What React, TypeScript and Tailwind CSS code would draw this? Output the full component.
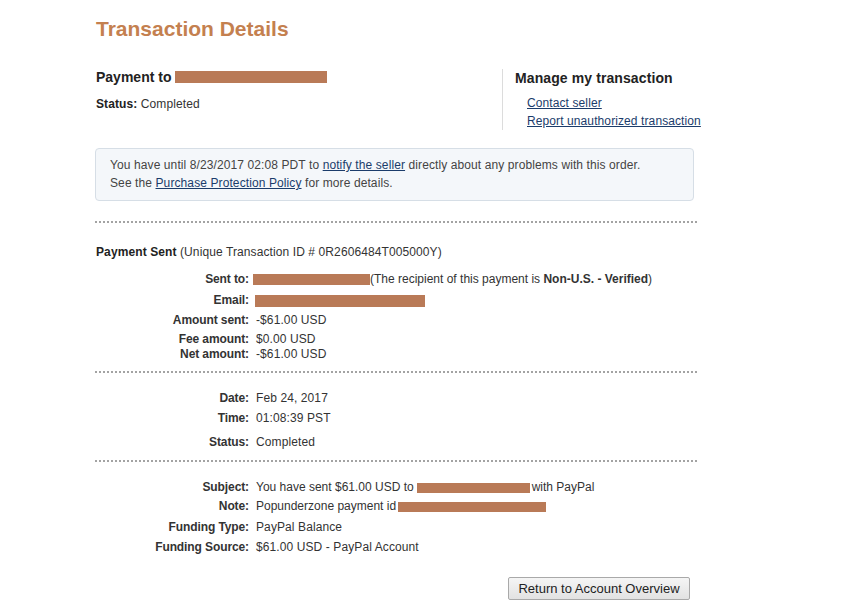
import React from "react";

const dots =
  "h-[2px] w-[603px] bg-[linear-gradient(to_right,#a3a3a3_2px,transparent_2px)] bg-[length:4px_2px]";

function Redact({ w, h = 11, className = "" }: { w: number; h?: number; className?: string }) {
  return (
    <span
      className={`inline-block bg-[#b97a57] align-middle ${className}`}
      style={{ width: w, height: h }}
    />
  );
}

function Row({
  label,
  children,
  mt,
}: {
  label: string;
  children: React.ReactNode;
  mt: string;
}) {
  return (
    <div className={`flex leading-[15px] ${mt}`}>
      <div className="w-[155px] shrink-0 pr-[1px] text-right font-bold tracking-[-0.1px]">
        {label}
      </div>
      <div className="flex items-center pl-[6px]">{children}</div>
    </div>
  );
}

export default function App() {
  return (
    <div className="min-h-[613px] bg-white font-['Liberation_Sans',Arial,sans-serif] text-[12px] tracking-[0.1px] text-[#333]">
      <div className="ml-[95px] w-[603px] pt-[17px]">
        <h1 className="pl-[1px] text-[21px] font-bold leading-[24px] tracking-normal text-[#c4804f]">
          Transaction Details
        </h1>

        {/* header: payee + manage links */}
        <div className="mt-[28px] flex">
          <div className="w-[407px] shrink-0 pl-[1px]">
            <div className="flex items-center gap-[4px] text-[14px] font-bold leading-[16px] tracking-normal text-[#222]">
              Payment to <Redact w={152} h={12} />
            </div>
            <div className="mt-[12px] leading-[15px]">
              <span className="font-bold text-[#222]">Status:</span> Completed
            </div>
          </div>
          <div className="h-[61px] shrink-0 whitespace-nowrap border-l border-[#dcdcdc] pl-[12px]">
            <div className="text-[14px] font-bold leading-[18px] tracking-[0.1px] text-[#222]">
              Manage my transaction
            </div>
            <div className="mt-[7px] flex flex-col pl-[12px] leading-[18px] text-[#1b3c6b]">
              <a className="underline" href="#">Contact seller</a>
              <a className="underline" href="#">Report unauthorized transaction</a>
            </div>
          </div>
        </div>

        {/* notice */}
        <div className="mt-[18px] h-[53px] w-[599px] rounded-[4px] border border-[#d6dee6] bg-[#f4f7fa] pl-[14px] pt-[7px] leading-[18px] text-[#444]">
          <div>
            You have until 8/23/2017 02:08 PDT to{" "}
            <a className="text-[#1b3c6b] underline" href="#">notify the seller</a>{" "}
            directly about any problems with this order.
          </div>
          <div>
            See the{" "}
            <a className="text-[#1b3c6b] underline" href="#">Purchase Protection Policy</a>{" "}
            for more details.
          </div>
        </div>

        <div className={`mt-[20px] ${dots}`} />

        <div className="mt-[22px] pl-[1px] leading-[15px]">
          <span className="font-bold text-[#222]">Payment Sent</span> (Unique Transaction ID #
          0R2606484T005000Y)
        </div>

        <Row label="Sent to:" mt="mt-[12px]">
          <Redact w={117} className="-ml-[3px]" />
          <span className="tracking-normal">
            (The recipient of this payment is <b>Non-U.S. - Verified</b>)
          </span>
        </Row>
        <Row label="Email:" mt="mt-[6px]">
          <Redact w={170} h={12} className="-ml-[1px]" />
        </Row>
        <Row label="Amount sent:" mt="mt-[5px]">-$61.00 USD</Row>
        <Row label="Fee amount:" mt="mt-[4px]">$0.00 USD</Row>
        <Row label="Net amount:" mt="mt-0">-$61.00 USD</Row>

        <div className={`mt-[9px] ${dots}`} />

        <Row label="Date:" mt="mt-[18px]">Feb 24, 2017</Row>
        <Row label="Time:" mt="mt-[5px]">01:08:39 PST</Row>
        <Row label="Status:" mt="mt-[9px]">Completed</Row>

        <div className={`mt-[10px] ${dots}`} />

        <Row label="Subject:" mt="mt-[18px]">
          <span className="tracking-normal">You have sent $61.00 USD to</span>
          <Redact w={113} h={10} className="ml-[3px]" />
          <span className="ml-[2px] tracking-normal">with PayPal</span>
        </Row>
        <Row label="Note:" mt="mt-[4px]">
          <span className="tracking-normal">Popunderzone payment id</span>
          <Redact w={148} h={10} className="ml-[2px]" />
        </Row>
        <Row label="Funding Type:" mt="mt-[6px]">PayPal Balance</Row>
        <Row label="Funding Source:" mt="mt-[5px]">$61.00 USD - PayPal Account</Row>

        <div className="mr-[8px] mt-[22px] flex justify-end">
          <button className="h-[23px] w-[182px] rounded-[2px] border border-[#a9a9a9] bg-[linear-gradient(#f5f5f5,#e2e2e2)] text-[13px] leading-[20px] tracking-normal text-[#222]">
            Return to Account Overview
          </button>
        </div>
      </div>
    </div>
  );
}
